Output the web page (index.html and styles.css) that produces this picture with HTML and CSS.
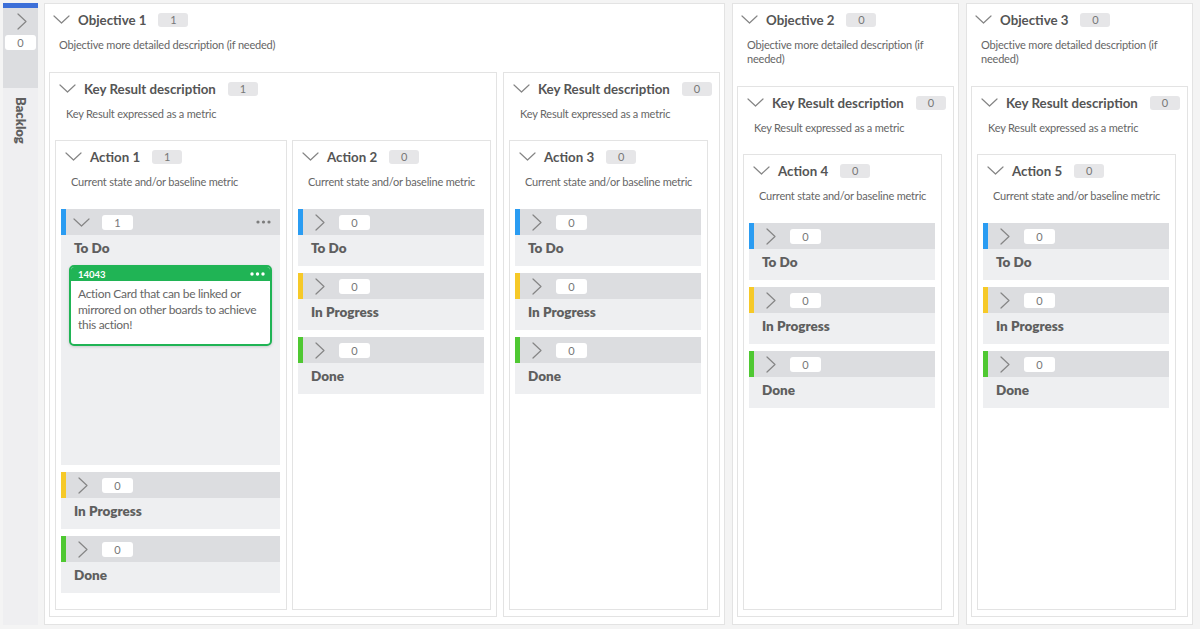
FILE: index.html
```html
<!DOCTYPE html>
<html lang="en">
<head>
<meta charset="utf-8">
<title>OKR Board</title>
<link rel="stylesheet" href="styles.css">
</head>
<body>
<div class="board">
  <aside class="backlog">
    <div class="backlog-top">
      <svg class="chev-r" viewBox="0 0 10 17" width="10" height="17"><polyline points="1,1 9,8.5 1,16"/></svg>
      <span class="badge white">0</span>
    </div>
    <div class="backlog-body"><span class="backlog-label">Backlog</span></div>
  </aside>

  <section class="box objective">
    <header class="head">
      <svg class="chev-d" viewBox="0 0 17 9" width="17" height="9"><polyline points="1,1 8.5,8 16,1"/></svg>
      <h2 class="title">Objective 1</h2><span class="badge">1</span>
    </header>
    <p class="desc">Objective more detailed description (if needed)</p>
    <div class="row">
      <section class="box kr">
        <header class="head">
          <svg class="chev-d" viewBox="0 0 17 9" width="17" height="9"><polyline points="1,1 8.5,8 16,1"/></svg>
          <h3 class="title">Key Result description</h3><span class="badge">1</span>
        </header>
        <p class="desc">Key Result expressed as a metric</p>
        <div class="row">
          <section class="box action">
            <header class="head">
              <svg class="chev-d" viewBox="0 0 17 9" width="17" height="9"><polyline points="1,1 8.5,8 16,1"/></svg>
              <h4 class="title">Action 1</h4><span class="badge">1</span>
            </header>
            <p class="desc">Current state and/or baseline metric</p>
            <div class="lanes">
              <div class="lane open todo">
                <div class="lane-head">
                  <span class="ico"><svg class="chev-d" viewBox="0 0 17 9" width="17" height="9"><polyline points="1,1 8.5,8 16,1"/></svg></span>
                  <span class="badge white">1</span>
                  <svg class="dots" viewBox="0 0 15 4" width="15" height="4"><circle cx="2" cy="2" r="1.6"/><circle cx="7.5" cy="2" r="1.6"/><circle cx="13" cy="2" r="1.6"/></svg>
                </div>
                <div class="lane-body">
                  <div class="lane-title">To Do</div>
                  <article class="card">
                    <div class="card-head"><span class="card-id">14043</span>
                      <svg class="dots light" viewBox="0 0 15 4" width="15" height="4"><circle cx="2" cy="2" r="1.7"/><circle cx="7.5" cy="2" r="1.7"/><circle cx="13" cy="2" r="1.7"/></svg>
                    </div>
                    <p class="card-text">Action Card that can be linked or mirrored on other boards to achieve this action!</p>
                  </article>
                </div>
              </div>
              <div class="lane wide prog">
                <div class="lane-head"><span class="ico"><svg class="chev-r" viewBox="0 0 10 17" width="10" height="17"><polyline points="1,1 9,8.5 1,16"/></svg></span><span class="badge white">0</span></div>
                <div class="lane-body"><div class="lane-title">In Progress</div></div>
              </div>
              <div class="lane wide done">
                <div class="lane-head"><span class="ico"><svg class="chev-r" viewBox="0 0 10 17" width="10" height="17"><polyline points="1,1 9,8.5 1,16"/></svg></span><span class="badge white">0</span></div>
                <div class="lane-body"><div class="lane-title">Done</div></div>
              </div>
            </div>
          </section>

          <section class="box action">
            <header class="head">
              <svg class="chev-d" viewBox="0 0 17 9" width="17" height="9"><polyline points="1,1 8.5,8 16,1"/></svg>
              <h4 class="title">Action 2</h4><span class="badge">0</span>
            </header>
            <p class="desc">Current state and/or baseline metric</p>
            <div class="lanes">
              <div class="lane todo">
                <div class="lane-head"><span class="ico"><svg class="chev-r" viewBox="0 0 10 17" width="10" height="17"><polyline points="1,1 9,8.5 1,16"/></svg></span><span class="badge white">0</span></div>
                <div class="lane-body"><div class="lane-title">To Do</div></div>
              </div>
              <div class="lane prog">
                <div class="lane-head"><span class="ico"><svg class="chev-r" viewBox="0 0 10 17" width="10" height="17"><polyline points="1,1 9,8.5 1,16"/></svg></span><span class="badge white">0</span></div>
                <div class="lane-body"><div class="lane-title">In Progress</div></div>
              </div>
              <div class="lane done">
                <div class="lane-head"><span class="ico"><svg class="chev-r" viewBox="0 0 10 17" width="10" height="17"><polyline points="1,1 9,8.5 1,16"/></svg></span><span class="badge white">0</span></div>
                <div class="lane-body"><div class="lane-title">Done</div></div>
              </div>
            </div>
          </section>
        </div>
      </section>

      <section class="box kr">
        <header class="head">
          <svg class="chev-d" viewBox="0 0 17 9" width="17" height="9"><polyline points="1,1 8.5,8 16,1"/></svg>
          <h3 class="title">Key Result description</h3><span class="badge">0</span>
        </header>
        <p class="desc">Key Result expressed as a metric</p>
        <div class="row">
          <section class="box action">
            <header class="head">
              <svg class="chev-d" viewBox="0 0 17 9" width="17" height="9"><polyline points="1,1 8.5,8 16,1"/></svg>
              <h4 class="title">Action 3</h4><span class="badge">0</span>
            </header>
            <p class="desc">Current state and/or baseline metric</p>
            <div class="lanes">
              <div class="lane todo">
                <div class="lane-head"><span class="ico"><svg class="chev-r" viewBox="0 0 10 17" width="10" height="17"><polyline points="1,1 9,8.5 1,16"/></svg></span><span class="badge white">0</span></div>
                <div class="lane-body"><div class="lane-title">To Do</div></div>
              </div>
              <div class="lane prog">
                <div class="lane-head"><span class="ico"><svg class="chev-r" viewBox="0 0 10 17" width="10" height="17"><polyline points="1,1 9,8.5 1,16"/></svg></span><span class="badge white">0</span></div>
                <div class="lane-body"><div class="lane-title">In Progress</div></div>
              </div>
              <div class="lane done">
                <div class="lane-head"><span class="ico"><svg class="chev-r" viewBox="0 0 10 17" width="10" height="17"><polyline points="1,1 9,8.5 1,16"/></svg></span><span class="badge white">0</span></div>
                <div class="lane-body"><div class="lane-title">Done</div></div>
              </div>
            </div>
          </section>
        </div>
      </section>
    </div>
  </section>

  <section class="box objective">
    <header class="head">
      <svg class="chev-d" viewBox="0 0 17 9" width="17" height="9"><polyline points="1,1 8.5,8 16,1"/></svg>
      <h2 class="title">Objective 2</h2><span class="badge">0</span>
    </header>
    <p class="desc">Objective more detailed description (if needed)</p>
    <div class="row">
      <section class="box kr">
        <header class="head">
          <svg class="chev-d" viewBox="0 0 17 9" width="17" height="9"><polyline points="1,1 8.5,8 16,1"/></svg>
          <h3 class="title">Key Result description</h3><span class="badge">0</span>
        </header>
        <p class="desc">Key Result expressed as a metric</p>
        <div class="row">
          <section class="box action">
            <header class="head">
              <svg class="chev-d" viewBox="0 0 17 9" width="17" height="9"><polyline points="1,1 8.5,8 16,1"/></svg>
              <h4 class="title">Action 4</h4><span class="badge">0</span>
            </header>
            <p class="desc">Current state and/or baseline metric</p>
            <div class="lanes">
              <div class="lane todo">
                <div class="lane-head"><span class="ico"><svg class="chev-r" viewBox="0 0 10 17" width="10" height="17"><polyline points="1,1 9,8.5 1,16"/></svg></span><span class="badge white">0</span></div>
                <div class="lane-body"><div class="lane-title">To Do</div></div>
              </div>
              <div class="lane prog">
                <div class="lane-head"><span class="ico"><svg class="chev-r" viewBox="0 0 10 17" width="10" height="17"><polyline points="1,1 9,8.5 1,16"/></svg></span><span class="badge white">0</span></div>
                <div class="lane-body"><div class="lane-title">In Progress</div></div>
              </div>
              <div class="lane done">
                <div class="lane-head"><span class="ico"><svg class="chev-r" viewBox="0 0 10 17" width="10" height="17"><polyline points="1,1 9,8.5 1,16"/></svg></span><span class="badge white">0</span></div>
                <div class="lane-body"><div class="lane-title">Done</div></div>
              </div>
            </div>
          </section>
        </div>
      </section>
    </div>
  </section>

  <section class="box objective">
    <header class="head">
      <svg class="chev-d" viewBox="0 0 17 9" width="17" height="9"><polyline points="1,1 8.5,8 16,1"/></svg>
      <h2 class="title">Objective 3</h2><span class="badge">0</span>
    </header>
    <p class="desc">Objective more detailed description (if needed)</p>
    <div class="row">
      <section class="box kr">
        <header class="head">
          <svg class="chev-d" viewBox="0 0 17 9" width="17" height="9"><polyline points="1,1 8.5,8 16,1"/></svg>
          <h3 class="title">Key Result description</h3><span class="badge">0</span>
        </header>
        <p class="desc">Key Result expressed as a metric</p>
        <div class="row">
          <section class="box action">
            <header class="head">
              <svg class="chev-d" viewBox="0 0 17 9" width="17" height="9"><polyline points="1,1 8.5,8 16,1"/></svg>
              <h4 class="title">Action 5</h4><span class="badge">0</span>
            </header>
            <p class="desc">Current state and/or baseline metric</p>
            <div class="lanes">
              <div class="lane todo">
                <div class="lane-head"><span class="ico"><svg class="chev-r" viewBox="0 0 10 17" width="10" height="17"><polyline points="1,1 9,8.5 1,16"/></svg></span><span class="badge white">0</span></div>
                <div class="lane-body"><div class="lane-title">To Do</div></div>
              </div>
              <div class="lane prog">
                <div class="lane-head"><span class="ico"><svg class="chev-r" viewBox="0 0 10 17" width="10" height="17"><polyline points="1,1 9,8.5 1,16"/></svg></span><span class="badge white">0</span></div>
                <div class="lane-body"><div class="lane-title">In Progress</div></div>
              </div>
              <div class="lane done">
                <div class="lane-head"><span class="ico"><svg class="chev-r" viewBox="0 0 10 17" width="10" height="17"><polyline points="1,1 9,8.5 1,16"/></svg></span><span class="badge white">0</span></div>
                <div class="lane-body"><div class="lane-title">Done</div></div>
              </div>
            </div>
          </section>
        </div>
      </section>
    </div>
  </section>
</div>
</body>
</html>
```

FILE: styles.css
```css
* { box-sizing: border-box; }

html, body {
  margin: 0;
  padding: 0;
  background: #f4f4f4;
  font-family: "Lato", "Noto Sans", sans-serif;
  color: #5a5a5a;
}

.board {
  display: flex;
  align-items: stretch;
  gap: 6px;
  height: 629px;
  padding: 3px 4px 4px 3px;
}

/* Backlog */
.backlog {
  flex: 0 0 35px;
  display: flex;
  flex-direction: column;
  border-top: 5px solid #3c6fd8;
}
.backlog-top {
  height: 80px;
  background: #dcdde0;
  display: flex;
  flex-direction: column;
  align-items: center;
  padding-top: 5px;
}
.backlog-top .chev-r { margin-left: 3px; }
.backlog-top .badge { margin-top: 5px; width: 29px; }
.backlog-body {
  flex: 1;
  background: #efeff1;
  display: flex;
  justify-content: center;
  padding-top: 9px;
}
.backlog-label {
  writing-mode: vertical-rl;
  font-weight: 800;
  font-size: 13px;
  color: #5f5f5f;
}

/* generic boxes */
.box {
  background: #fff;
  border: 1px solid #e3e3e3;
  display: flex;
  flex-direction: column;
  flex-shrink: 0;
}
.objective { padding: 0 4px 7px; }
.objective + .objective { margin-left: 1px; }
.kr { padding: 0 5px 6px; min-width: 217px; }
.action { padding: 0 6px 0 5px; }

.row {
  flex: 1;
  display: flex;
  gap: 6px;
  align-items: stretch;
}
.kr > .row { gap: 5px; }

.head {
  height: 31px;
  display: flex;
  align-items: center;
  padding-left: 4px;
  white-space: nowrap;
}
.head .chev-d { width: 17px; height: 9px; margin-right: 8px; }
.title {
  margin: 0;
  font-size: 13.3px;
  font-weight: 700;
  color: #555;
}
.head .badge { margin-left: 12px; }

.desc {
  margin: 3px 0 20px;
  padding-left: 10px;
  font-size: 11px;
  letter-spacing: -0.2px;
  line-height: 14px;
  color: #666;
  width: 0;
  min-width: 100%;
}
.kr > .desc { margin-bottom: 19px; padding-left: 11px; }
.action > .desc { padding-left: 10px; }

.badge {
  display: inline-flex;
  align-items: center;
  justify-content: center;
  width: 30px;
  height: 14px;
  border-radius: 3px;
  background: #e6e6e8;
  color: #777;
  font-size: 11px;
}
.badge.white { background: #fff; width: 31px; height: 15px; }

svg polyline {
  fill: none;
  stroke: #858585;
  stroke-width: 1.2;
  stroke-linecap: round;
  stroke-linejoin: round;
}

/* Lanes */
.lanes {
  display: flex;
  flex-direction: column;
  gap: 7px;
}
.lane { width: 186px; }
.lane.open, .lane.wide { width: 219px; }
.lane-head {
  height: 26px;
  background: #dcdde0;
  display: flex;
  align-items: center;
  border-left: 5px solid #999;
  padding-right: 9px;
}
.todo .lane-head { border-left-color: #2a9cf2; }
.prog .lane-head { border-left-color: #f6c928; }
.done .lane-head { border-left-color: #4fc832; }
.ico {
  width: 30px;
  display: flex;
  justify-content: center;
}
.ico .chev-d { width: 17px; height: 9px; }
.ico .chev-r { margin-left: 3px; }
.lane-head .badge { margin-left: 6px; }
.dots { margin-left: auto; }
.dots circle { fill: #7c7c7c; }
.dots.light circle { fill: #fff; }

.lane-body {
  background: #eeeff1;
  height: 31px;
  padding: 5px 8px 0 13px;
}
.open .lane-body { height: 230px; padding-left: 8px; }
.open .lane-title { padding-left: 5px; }
.lane-title {
  font-size: 13.5px;
  font-weight: 800;
  line-height: 16px;
  color: #5f5f5f;
}

/* Card */
.card {
  margin-top: 9px;
  background: #fff;
  border: 2px solid #20b455;
  border-radius: 5px;
  box-shadow: 0 1px 3px rgba(0,0,0,0.15);
  overflow: hidden;
}
.card-head {
  background: #20b455;
  height: 14px;
  display: flex;
  align-items: center;
  padding: 0 5px 0 7px;
}
.card-id {
  color: #fff;
  font-size: 9.5px;
  font-weight: 700;
}
.card-text {
  margin: 0;
  padding: 5px 8px 11px 7px;
  font-size: 12px;
  letter-spacing: -0.3px;
  line-height: 15.5px;
  color: #666;
}
```
